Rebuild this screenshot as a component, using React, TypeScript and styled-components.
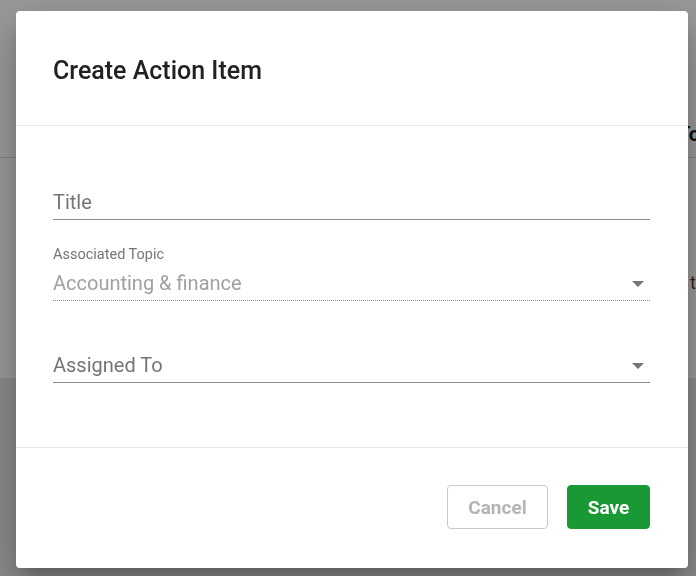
import { createGlobalStyle } from "styled-components";
import styled from "styled-components";

const GlobalStyle = createGlobalStyle`
  html, body {
    margin: 0;
    padding: 0;
    height: 100%;
    overflow: hidden;
    font-family: Roboto, "Liberation Sans", Arial, sans-serif;
    background: #ffffff;
  }
  * {
    box-sizing: border-box;
  }
`;

const Page = styled.div`
  width: 696px;
  height: 576px;
  display: flex;
  flex-direction: column;
  background: #f4f4f4;
`;

const Header = styled.header`
  height: 80px;
  background: #ffffff;
  box-shadow: 0 2px 6px rgba(0, 0, 0, 0.2);
`;

const Toolbar = styled.div`
  height: 78px;
  display: flex;
  align-items: flex-start;
  padding: 42px 0 0 678px;
  background: #ffffff;
  border-bottom: 1px solid #d6d6d6;
  white-space: nowrap;
  font-size: 20px;
  line-height: 24px;
  font-weight: 700;
  color: #111111;
`;

const Main = styled.main`
  flex: 1;
  display: grid;
  grid-template-rows: 220px 1fr;
  background: #ffffff;
`;

const Section = styled.div`
  display: flex;
  align-items: flex-start;
  padding: 114px 0 0 690px;
  white-space: nowrap;
  font-size: 18px;
  line-height: 21px;
  color: #5a3a20;
`;

const Lower = styled.div`
  background: #e8e8e8;
`;

const Overlay = styled.div`
  position: fixed;
  inset: 0;
  display: flex;
  align-items: flex-start;
  padding: 11px 8px 8px 16px;
  background: rgba(0, 0, 0, 0.4);
`;

const Dialog = styled.div`
  width: 672px;
  height: 557px;
  display: flex;
  flex-direction: column;
  background: #ffffff;
  border-radius: 4px;
  box-shadow: 0 11px 15px -7px rgba(0, 0, 0, 0.2),
    0 24px 38px 3px rgba(0, 0, 0, 0.14), 0 9px 46px 8px rgba(0, 0, 0, 0.12);
`;

const DialogHeader = styled.div`
  height: 115px;
  display: flex;
  align-items: center;
  padding: 4px 38px 0 37px;
  border-bottom: 1px solid #e6e6e6;
`;

const Title = styled.h2`
  margin: 0;
  font-size: 25px;
  font-weight: 500;
  color: #212121;
`;

const DialogBody = styled.div`
  flex: 1;
  display: flex;
  flex-direction: column;
  padding: 65px 38px 0 37px;
  border-bottom: 1px solid #e6e6e6;
`;

const Field = styled.div<{ $gap?: number }>`
  display: flex;
  flex-direction: column;
  margin-top: ${({ $gap }) => $gap ?? 0}px;
`;

const Label = styled.label`
  font-size: 14.5px;
  line-height: 15px;
  color: #757575;
  margin-bottom: 10px;
`;

const Input = styled.div<{ $disabled?: boolean }>`
  display: flex;
  align-items: center;
  justify-content: space-between;
  height: 29px;
  padding-bottom: 5px;
  font-size: 20px;
  line-height: 23px;
  color: ${({ $disabled }) => ($disabled ? "#a0a0a0" : "#757575")};
  border-bottom: 1px ${({ $disabled }) => ($disabled ? "dotted" : "solid")}
    ${({ $disabled }) => ($disabled ? "#8a8a8a" : "#8c8c8c")};
`;

const Caret = styled.span`
  width: 0;
  height: 0;
  margin-right: 6px;
  border-left: 6px solid transparent;
  border-right: 6px solid transparent;
  border-top: 6px solid #777777;
`;

const DialogFooter = styled.div`
  height: 120px;
  display: flex;
  align-items: flex-start;
  justify-content: flex-end;
  gap: 19px;
  padding: 37px 38px 0 37px;
`;

const Button = styled.button<{ $primary?: boolean }>`
  width: ${({ $primary }) => ($primary ? 83 : 101)}px;
  height: 44px;
  padding: 0;
  border-radius: 4px;
  font-family: Roboto, "Liberation Sans", Arial, sans-serif;
  font-size: 19px;
  font-weight: 700;
  cursor: pointer;
  border: 1px solid ${({ $primary }) => ($primary ? "#199936" : "#c9c9c9")};
  background: ${({ $primary }) => ($primary ? "#199936" : "#ffffff")};
  color: ${({ $primary }) => ($primary ? "#ffffff" : "#b4b4b4")};
`;

export default function App() {
  return (
    <>
      <GlobalStyle />
      <Page>
        <Header />
        <Toolbar>Topics</Toolbar>
        <Main>
          <Section>tasks</Section>
          <Lower />
        </Main>
      </Page>
      <Overlay>
        <Dialog>
          <DialogHeader>
            <Title>Create Action Item</Title>
          </DialogHeader>
          <DialogBody>
            <Field>
              <Input>Title</Input>
            </Field>
            <Field $gap={27}>
              <Label>Associated Topic</Label>
              <Input $disabled>
                Accounting &amp; finance
                <Caret />
              </Input>
            </Field>
            <Field $gap={53}>
              <Input>
                Assigned To
                <Caret />
              </Input>
            </Field>
          </DialogBody>
          <DialogFooter>
            <Button>Cancel</Button>
            <Button $primary>Save</Button>
          </DialogFooter>
        </Dialog>
      </Overlay>
    </>
  );
}
